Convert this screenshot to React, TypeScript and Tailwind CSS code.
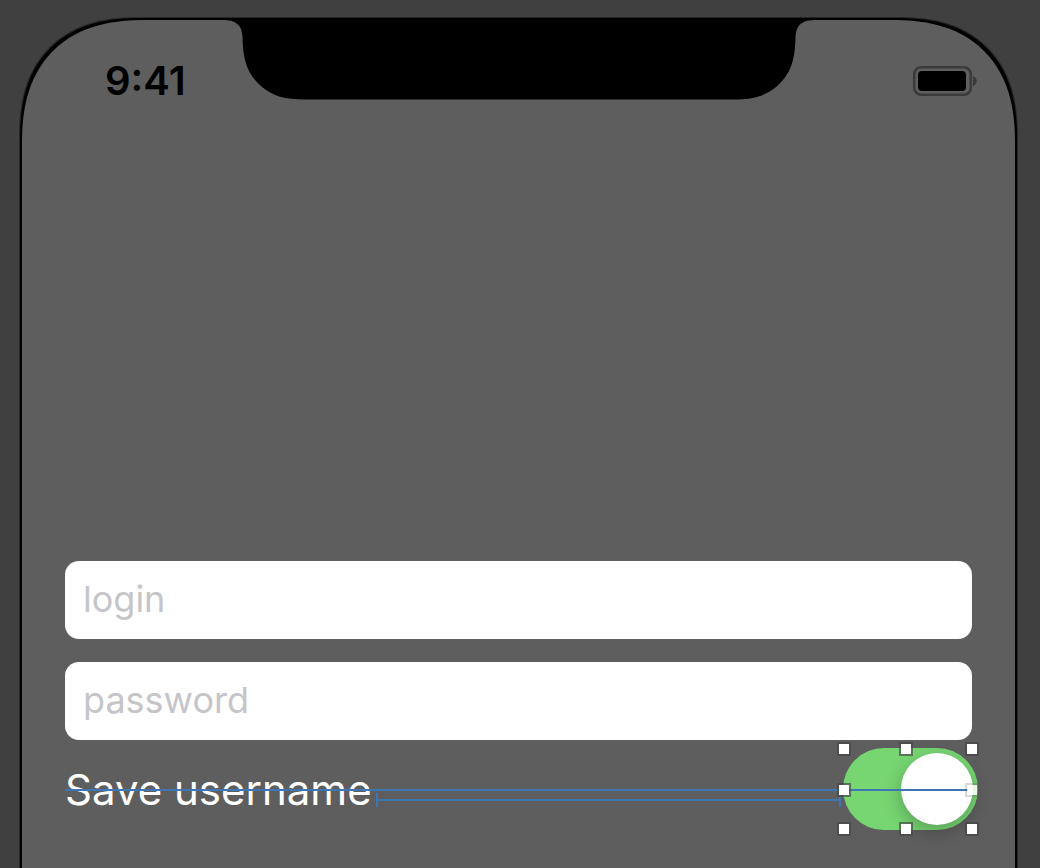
import { useState } from "react";

function Notch() {
  return (
    <svg
      aria-hidden="true"
      viewBox="0 0 592 82"
      className="mx-auto block h-[82px] w-[592px]"
    >
      <path
        d="M0 0V2C12 2 19 6 19.500 19C20 44 25 57 39 69C50 78 62 81.500 82 81.500H510C530 81.500 542 78 553 69C567 57 572 44 572.500 19C573 6 580 2 592 2V0Z"
        fill="#000"
      />
    </svg>
  );
}

function Battery() {
  return (
    <svg
      role="img"
      aria-label="Battery full"
      viewBox="0 0 66 32"
      className="h-8 w-[66px]"
    >
      <rect x="2.200" y="2.200" width="56.600" height="27.600" rx="7" fill="none" stroke="#3b3b3b" strokeWidth="2.600" />
      <rect x="6" y="6" width="48" height="20" rx="4" fill="#000" />
      <path d="M61 11C66 12.500 66 19.500 61 21Z" fill="#3b3b3b" />
    </svg>
  );
}

function StatusBar() {
  return (
    <header className="relative h-[120px]">
      <Notch />
      <div className="absolute inset-x-0 top-[43px] flex items-center justify-between pr-[37px] pl-[83px]">
        <time className="text-[40px] leading-10 font-semibold text-black">9:41</time>
        <Battery />
      </div>
    </header>
  );
}

function Field({ id, type, placeholder }: { id: string; type: string; placeholder: string }) {
  return (
    <input
      id={id}
      type={type}
      aria-label={placeholder}
      placeholder={placeholder}
      className="h-[78px] w-full rounded-[14px] bg-white px-[18px] pb-[2px] text-[36px] text-black outline-none placeholder:text-[#c5c5c9]"
    />
  );
}

const handles = [
  "left-0 top-0",
  "left-[62px] top-0",
  "left-[128px] top-0",
  "left-0 top-[41px]",
  "left-0 top-20",
  "left-[62px] top-20",
  "left-[128px] top-20",
];

function Switch({ id }: { id: string }) {
  const [on, setOn] = useState(true);
  return (
    <input
      id={id}
      type="checkbox"
      role="switch"
      checked={on}
      onChange={() => setOn(!on)}
      className="flex h-[82px] w-[135px] shrink-0 appearance-none items-center rounded-full bg-[#8a8a8a] px-[5px] before:size-[72px] before:rounded-full before:bg-white before:shadow-[0_6px_18px_rgba(0,0,0,0.25)] before:content-[''] checked:justify-end checked:bg-[#77d572]"
    />
  );
}

function SelectionHandles() {
  return (
    <div className="pointer-events-none absolute top-[-6px] right-0 h-[94px] w-[141px]">
      {handles.map((place) => (
        <span
          key={place}
          className={`absolute size-[14px] border-2 border-[#444]/65 bg-white bg-clip-padding ${place}`}
        />
      ))}
      <span className="absolute top-[41px] left-[128px] size-[14px] border-2 border-[#444]/20 bg-white/85 bg-clip-padding" />
    </div>
  );
}

export default function App() {
  return (
    <div className="min-h-screen overflow-hidden bg-[#404040] pt-[18px] pr-[23px] pl-5 font-['Inter','Liberation_Sans',sans-serif]">
      <div className="rounded-t-[120px] bg-black px-[2px] pt-[2px] shadow-[0_0_0_1px_rgba(0,0,0,0.4)] [corner-shape:superellipse(1.257)]">
        <div className="flow-root min-h-[850px] rounded-t-[123px] bg-[#5e5e5e] [corner-shape:superellipse(1.257)]">
          <div className="-mt-[2px]">
            <StatusBar />
          </div>
          <form className="mt-[423px] px-[43px]">
            <div className="flex flex-col gap-[23px]">
              <Field id="login" type="text" placeholder="login" />
              <Field id="password" type="password" placeholder="password" />
            </div>
            <div className="relative -mr-[6px] mt-2 flex items-center">
              <label htmlFor="save-username" className="pt-[2px] text-[42px] leading-[52px] whitespace-nowrap text-white">
                Save username
              </label>
              <div className="mr-[2px] ml-1 mt-[22px] h-[14px] grow border-x-2 border-[#3c76b4] py-[6px]">
                <div className="h-[2px] bg-[#3c76b4]" />
              </div>
              <Switch id="save-username" />
              <div className="pointer-events-none absolute top-[41px] right-[10px] left-0 h-[2px] bg-[#3c76b4]" />
              <SelectionHandles />
            </div>
          </form>
        </div>
      </div>
    </div>
  );
}
